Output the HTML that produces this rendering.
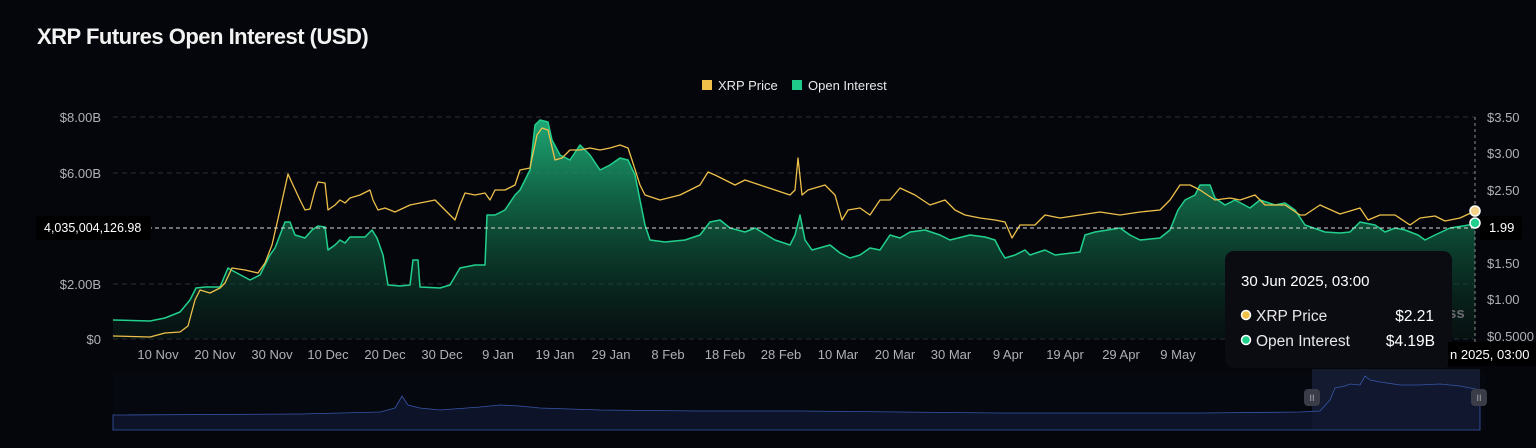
<!DOCTYPE html>
<html><head><meta charset="utf-8"><style>
html,body{margin:0;padding:0;background:#05060b;width:1536px;height:448px;overflow:hidden;font-family:"Liberation Sans",sans-serif}
</style></head><body>
<svg width="1536" height="448" viewBox="0 0 1536 448" xmlns="http://www.w3.org/2000/svg" style="position:absolute;left:0;top:0">
<defs>
<linearGradient id="g" x1="0" y1="0" x2="0" y2="1">
<stop offset="0" stop-color="#1fb07a" stop-opacity="0.95"/>
<stop offset="0.5" stop-color="#137a52" stop-opacity="0.6"/>
<stop offset="1" stop-color="#0a2a1e" stop-opacity="0.3"/>
</linearGradient>
</defs>
<rect width="1536" height="448" fill="#05060b"/>
<text x="37" y="44" fill="#f2f2f2" font-size="22" font-weight="bold" letter-spacing="-0.5">XRP Futures Open Interest (USD)</text>
<rect x="702" y="80" width="10" height="10" fill="#f0c04a"/>
<text x="718" y="90" fill="#e8e8e8" font-size="13">XRP Price</text>
<rect x="792" y="80" width="10" height="10" fill="#1fc98a"/>
<text x="808" y="90" fill="#e8e8e8" font-size="13">Open Interest</text>
<g stroke="#2a2d36" stroke-dasharray="5,4" stroke-width="1">
<line x1="113" y1="117" x2="1475" y2="117"/><line x1="113" y1="173" x2="1475" y2="173"/>
<line x1="113" y1="284" x2="1475" y2="284"/><line x1="113" y1="339" x2="1475" y2="339"/>
</g>
<g fill="#b0b0b6" font-size="13" text-anchor="end">
<text x="101" y="122">$8.00B</text><text x="101" y="178">$6.00B</text>
<text x="101" y="289">$2.00B</text><text x="101" y="344">$0</text>
</g>
<g fill="#b0b0b6" font-size="13">
<text x="1487" y="122">$3.50</text><text x="1487" y="158">$3.00</text><text x="1487" y="195">$2.50</text>
<text x="1487" y="268">$1.50</text><text x="1487" y="304">$1.00</text><text x="1487" y="341">$0.5000</text>
</g>
<g fill="#b0b0b6" font-size="13" text-anchor="middle">
<text x="158" y="359">10 Nov</text><text x="215" y="359">20 Nov</text><text x="272" y="359">30 Nov</text>
<text x="328" y="359">10 Dec</text><text x="385" y="359">20 Dec</text><text x="442" y="359">30 Dec</text>
<text x="498" y="359">9 Jan</text><text x="555" y="359">19 Jan</text><text x="611" y="359">29 Jan</text>
<text x="668" y="359">8 Feb</text><text x="725" y="359">18 Feb</text><text x="781" y="359">28 Feb</text>
<text x="838" y="359">10 Mar</text><text x="895" y="359">20 Mar</text><text x="951" y="359">30 Mar</text>
<text x="1008" y="359">9 Apr</text><text x="1065" y="359">19 Apr</text><text x="1121" y="359">29 Apr</text>
<text x="1178" y="359">9 May</text>
</g>
<path fill="url(#g)" d="M113,320 L150,321 165,318 180,312 190,300 196,288 205,287 220,287 228,268 235,272 250,280 260,275 270,255 275,248 285,222 290,222 295,235 305,238 312,230 318,226 325,227 328,250 335,245 340,240 345,243 350,237 365,237 372,230 377,238 383,255 388,285 400,286 410,285 413,260 418,260 420,287 440,288 450,285 460,268 475,265 485,265 487,215 495,215 505,210 515,195 520,190 530,170 535,125 540,120 548,122 552,140 560,155 570,160 580,145 590,155 600,170 610,165 620,158 628,160 635,175 645,225 650,240 665,242 685,240 700,235 710,222 720,220 730,228 745,232 755,228 775,240 790,245 795,235 800,215 805,240 812,250 830,245 840,253 850,258 860,255 870,248 880,250 890,235 900,238 910,232 925,230 940,235 950,240 970,235 985,237 995,240 1000,250 1005,258 1015,255 1025,250 1030,255 1045,250 1055,255 1080,252 1085,235 1095,232 1120,228 1130,235 1140,240 1160,238 1170,230 1178,210 1185,200 1195,195 1200,185 1210,185 1215,198 1225,205 1235,200 1250,208 1260,200 1275,205 1285,203 1295,210 1305,225 1325,232 1340,233 1350,232 1360,222 1375,225 1385,232 1395,228 1405,230 1418,235 1425,240 1435,235 1450,228 1475,224 L1475,339 L113,339 Z"/>
<polyline fill="none" stroke="#22d08e" stroke-width="1.5" stroke-linejoin="round" points="113,320 150,321 165,318 180,312 190,300 196,288 205,287 220,287 228,268 235,272 250,280 260,275 270,255 275,248 285,222 290,222 295,235 305,238 312,230 318,226 325,227 328,250 335,245 340,240 345,243 350,237 365,237 372,230 377,238 383,255 388,285 400,286 410,285 413,260 418,260 420,287 440,288 450,285 460,268 475,265 485,265 487,215 495,215 505,210 515,195 520,190 530,170 535,125 540,120 548,122 552,140 560,155 570,160 580,145 590,155 600,170 610,165 620,158 628,160 635,175 645,225 650,240 665,242 685,240 700,235 710,222 720,220 730,228 745,232 755,228 775,240 790,245 795,235 800,215 805,240 812,250 830,245 840,253 850,258 860,255 870,248 880,250 890,235 900,238 910,232 925,230 940,235 950,240 970,235 985,237 995,240 1000,250 1005,258 1015,255 1025,250 1030,255 1045,250 1055,255 1080,252 1085,235 1095,232 1120,228 1130,235 1140,240 1160,238 1170,230 1178,210 1185,200 1195,195 1200,185 1210,185 1215,198 1225,205 1235,200 1250,208 1260,200 1275,205 1285,203 1295,210 1305,225 1325,232 1340,233 1350,232 1360,222 1375,225 1385,232 1395,228 1405,230 1418,235 1425,240 1435,235 1450,228 1475,224"/>
<polyline fill="none" stroke="#eec04a" stroke-width="1.3" stroke-linejoin="round" points="113,336 150,337 165,333 180,332 188,326 195,300 200,290 210,293 220,288 225,283 232,268 245,270 258,273 265,263 272,245 280,210 288,174 293,185 300,200 305,210 310,209 315,190 318,182 325,183 328,210 335,205 340,200 345,203 350,198 360,195 370,190 373,200 378,210 385,208 395,212 410,205 425,202 435,200 445,210 455,220 460,205 465,193 475,195 485,193 490,200 495,190 505,190 515,185 520,170 530,168 537,135 542,128 548,130 555,160 562,158 570,150 580,150 590,148 600,150 610,148 620,145 628,148 632,160 640,185 645,195 660,200 680,195 700,185 708,172 715,175 725,180 735,185 745,180 760,185 775,190 790,195 795,190 798,158 802,195 808,190 825,185 835,195 842,220 848,210 860,208 870,215 880,200 890,200 900,188 915,195 930,205 945,200 955,210 965,215 980,218 995,220 1005,222 1012,238 1020,225 1035,225 1045,215 1060,218 1080,215 1100,212 1120,215 1140,212 1160,210 1170,200 1180,185 1190,185 1200,190 1215,200 1230,198 1240,200 1255,195 1265,205 1285,205 1300,215 1305,215 1320,205 1340,214 1360,208 1368,220 1380,215 1395,215 1410,225 1420,218 1435,216 1445,221 1460,218 1475,211"/>
<line x1="113" y1="228" x2="1475" y2="228" stroke="#d8d8d8" stroke-dasharray="4,3" stroke-width="1"/>
<line x1="1475" y1="117" x2="1475" y2="345" stroke="#8a8a8a" stroke-dasharray="3,3" stroke-width="1"/>
<rect x="36" y="216" width="115" height="24" rx="3" fill="#000"/>
<text x="44" y="232" fill="#fff" font-size="12.5">4,035,004,126.98</text>
<rect x="1480" y="216" width="42" height="24" rx="3" fill="#000"/>
<text x="1489" y="232" fill="#fff" font-size="13">1.99</text>
<circle cx="1475" cy="211" r="5" fill="#f4d28a" stroke="#fff" stroke-width="1.5"/>
<circle cx="1475" cy="223" r="5" fill="#22d08e" stroke="#fff" stroke-width="1.5"/>
<text x="1448" y="318" fill="#6a6a70" font-size="15" font-weight="bold">ss</text>
<rect x="1225" y="251" width="227" height="117" rx="9" fill="#0b0c12"/>
<text x="1241" y="286" fill="#fff" font-size="15">30 Jun 2025, 03:00</text>
<circle cx="1246" cy="315" r="4.5" fill="#f0c04a" stroke="#fff" stroke-width="1.5"/>
<text x="1256" y="321" fill="#e8e8e8" font-size="15.5">XRP Price</text>
<text x="1434" y="321" fill="#fff" font-size="15.5" text-anchor="end">$2.21</text>
<circle cx="1246" cy="340" r="4.5" fill="#22d08e" stroke="#fff" stroke-width="1.5"/>
<text x="1256" y="346" fill="#e8e8e8" font-size="15.5">Open Interest</text>
<text x="1435" y="346" fill="#fff" font-size="15.5" text-anchor="end">$4.19B</text>
<rect x="1448" y="342" width="88" height="24" fill="#000"/>
<text x="1450" y="359" fill="#fff" font-size="13">n 2025, 03:00</text>
<rect x="113" y="373" width="1372" height="57" fill="#06080f"/>
<rect x="1312" y="369" width="168" height="61" fill="#182038" opacity="0.8"/>
<path fill="#0f1630" fill-opacity="0.8" stroke="#3756a8" stroke-width="0.8" d="M113,415 L300,414 380,412 395,408 402,396 408,405 420,408 440,410 480,407 500,405 520,406 540,408 600,410 700,411 800,411 900,412 1000,413 1100,413 1200,413 1300,412 1320,411 1330,400 1335,388 1340,387 1345,386 1350,384 1360,385 1365,376 1370,380 1380,382 1400,385 1420,385 1440,384 1460,386 1475,389 1480,390 L1480,430 L113,430 Z"/>
<rect x="1304" y="389" width="16" height="17" rx="4" fill="#3a3d48"/>
<text x="1312" y="401" fill="#aaa" font-size="9" text-anchor="middle">II</text>
<rect x="1471" y="389" width="16" height="17" rx="4" fill="#3a3d48"/>
<text x="1479" y="401" fill="#aaa" font-size="9" text-anchor="middle">II</text>
</svg>
</body></html>
